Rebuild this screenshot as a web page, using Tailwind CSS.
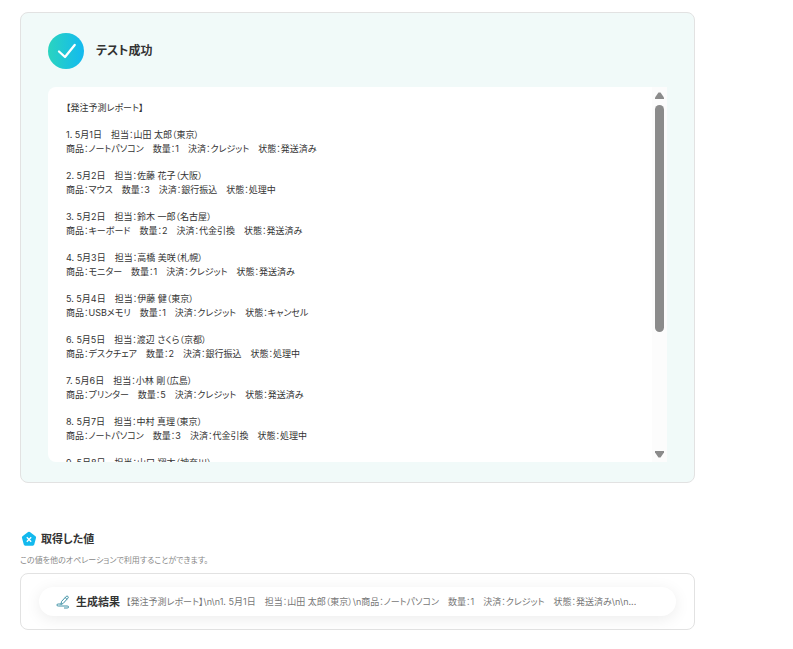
<!DOCTYPE html>
<html lang="ja">
  <head>
    <meta charset="UTF-8" />
    <meta name="viewport" content="width=device-width, initial-scale=1.0" />
    <title>テスト成功</title>
    <script src="https://cdn.jsdelivr.net/npm/@tailwindcss/browser@4"></script>
  </head>
  <body
    class="bg-white font-[Inter,'Noto_Sans_CJK_JP',sans-serif] text-[#333] [font-feature-settings:'palt']"
  >
    <main class="mx-5 max-w-[675px] pt-3">
      <!-- Test result -->
      <section
        class="rounded-lg border border-[#e2e2e2] bg-[#f1faf9] px-[27px] py-5"
      >
        <header class="flex items-center gap-3">
          <svg class="size-9" viewBox="0 0 36 36" fill="none">
            <defs>
              <linearGradient id="check-bg" x1="0" y1="0" x2="1" y2="0">
                <stop offset="0" stop-color="#2ad4bf" />
                <stop offset="1" stop-color="#13b9f0" />
              </linearGradient>
            </defs>
            <circle cx="18" cy="18" r="18" fill="url(#check-bg)" />
            <path
              d="M11 18.5l6 5.5 9.7-12"
              stroke="#fff"
              stroke-width="2.3"
              stroke-linecap="round"
              stroke-linejoin="round"
            />
          </svg>
          <h1 class="text-[12px] leading-4 font-bold">テスト成功</h1>
        </header>

        <div
          class="mt-[18px] flex h-[375px] overflow-hidden rounded-l-lg bg-white"
        >
          <div
            class="min-w-0 flex-1 space-y-[13px] overflow-hidden pt-[14px] pl-[18px] text-[9px] leading-[14px] whitespace-nowrap"
          >
            <p>【発注予測レポート】</p>
            <p>1. 5月1日　担当：山田 太郎（東京）<br />商品：ノートパソコン　数量：1　決済：クレジット　状態：発送済み</p>
            <p>2. 5月2日　担当：佐藤 花子（大阪）<br />商品：マウス　数量：3　決済：銀行振込　状態：処理中</p>
            <p>3. 5月2日　担当：鈴木 一郎（名古屋）<br />商品：キーボード　数量：2　決済：代金引換　状態：発送済み</p>
            <p>4. 5月3日　担当：高橋 美咲（札幌）<br />商品：モニター　数量：1　決済：クレジット　状態：発送済み</p>
            <p>5. 5月4日　担当：伊藤 健（東京）<br />商品：USBメモリ　数量：1　決済：クレジット　状態：キャンセル</p>
            <p>6. 5月5日　担当：渡辺 さくら（京都）<br />商品：デスクチェア　数量：2　決済：銀行振込　状態：処理中</p>
            <p>7. 5月6日　担当：小林 剛（広島）<br />商品：プリンター　数量：5　決済：クレジット　状態：発送済み</p>
            <p>8. 5月7日　担当：中村 真理（東京）<br />商品：ノートパソコン　数量：3　決済：代金引換　状態：処理中</p>
            <p>9. 5月8日　担当：山口 翔太（神奈川）</p>
          </div>
          <!-- Scrollbar -->
          <div
            class="flex w-[15px] flex-col items-center bg-[#fcfcfc] pt-[5px] pb-1"
          >
            <svg class="h-2 w-[9px]" viewBox="0 0 9 8" fill="#8b8b8b">
              <path d="M3.5 .5h2L9 5.5V7H0V5.5z" />
            </svg>
            <div class="mt-[5px] h-[227px] w-[9px] rounded-full bg-[#8b8b8b]"></div>
            <svg class="mt-auto h-2 w-[9px]" viewBox="0 0 9 8" fill="#8b8b8b">
              <path d="M0 1h9v1.5L5.5 7.5h-2L0 2.5z" />
            </svg>
          </div>
        </div>
      </section>

      <!-- Output values -->
      <section class="mt-12">
        <div class="flex items-center gap-1">
          <svg class="ml-px size-4" viewBox="0 0 16 16">
            <path
              d="M8 2.2l5.6 4.2-1.8 6.8H4.2L2.4 6.4z"
              fill="#13b9ee"
              stroke="#13b9ee"
              stroke-width="3"
              stroke-linejoin="round"
            />
            <path
              d="M5.8 6.2l4.4 4.6M10.2 6.2l-4.4 4.6"
              stroke="#fff"
              stroke-width="1.3"
            />
          </svg>
          <h2 class="text-[11px] leading-4 font-bold">取得した値</h2>
        </div>
        <p class="mt-[7px] text-[8px] leading-3 text-[#888]">
          この値を他のオペレーションで利用することができます。
        </p>
        <div
          class="mt-[7px] rounded-lg border border-[#e2e2e2] px-[18px] py-[13px]"
        >
          <div
            class="flex h-[29px] items-center rounded-full bg-white px-[17px] shadow-[0_3px_16px_rgba(0,0,0,0.08)]"
          >
            <svg
              class="size-[14px] shrink-0"
              viewBox="0 0 14 14"
              fill="none"
              stroke="#4192a6"
              stroke-linecap="round"
              stroke-linejoin="round"
            >
              <path d="M5 9l.6-2.6 4.6-5q.8-.8 1.7 0t0 1.8L7.3 8.3zM9.2 2.6l1.7 1.6" />
              <path d="M5 9H2.4Q.8 9 .8 10t1.6 1h8.8q1.4 0 1.4 1t-1.4 1H8.4" />
            </svg>
            <h3 class="ml-1.5 shrink-0 text-[11px] leading-4 font-bold">生成結果</h3>
            <p class="ml-1.5 truncate text-[9px] leading-4 text-[#777]">【発注予測レポート】\n\n1. 5月1日　担当：山田 太郎（東京）\n商品：ノートパソコン　数量：1　決済：クレジット　状態：発送済み\n\n...</p>
          </div>
        </div>
      </section>
    </main>
  </body>
</html>
